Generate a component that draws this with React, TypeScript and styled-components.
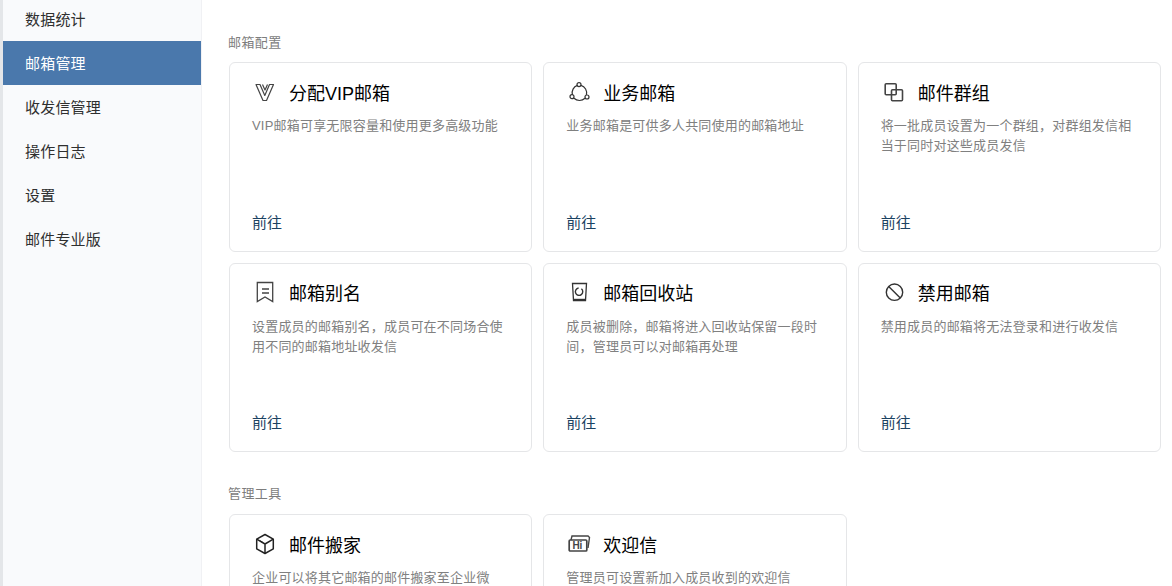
import React from 'react';
import styled, { createGlobalStyle } from 'styled-components';

const GlobalStyle = createGlobalStyle`
  html, body {
    margin: 0;
    height: 100%;
    overflow: hidden;
    background: #fff;
    font-family: 'Liberation Sans', 'Noto Sans CJK SC', sans-serif;
  }
  #root { height: 100%; }
`;

const navItems = ['数据统计', '邮箱管理', '收发信管理', '操作日志', '设置', '邮件专业版'];

const VipIcon = () => (
  <svg width="22" height="20" viewBox="0 0 22 20" fill="none" stroke="#444" strokeWidth="1.2" strokeLinejoin="round">
    <path d="M6 2.5H2L9 18.5h3.5L19.5 2.5H15.5L10.8 13.5z" />
    <path d="M8.5 2.5L11 8l2.5-5.5" />
  </svg>
);

const GroupMailIcon = () => (
  <svg width="23" height="22" viewBox="0 0 23 22" fill="none" stroke="#333" strokeWidth="1.2">
    <path d="M9.4 4.4a7.8 7.8 0 0 0-5 9.4" />
    <path d="M13 4.4a7.8 7.8 0 0 1 5.4 9.4" />
    <path d="M6 17.3a8 8 0 0 0 11 0" />
    <circle cx="11" cy="3.6" r="2" />
    <circle cx="4" cy="15.7" r="2" />
    <circle cx="19" cy="16" r="2" />
  </svg>
);

const GroupIcon = () => (
  <svg width="21" height="20" viewBox="0 0 21 20" fill="none" stroke="#444" strokeWidth="1.6">
    <rect x="2.2" y="1.8" width="11" height="11" rx="1" />
    <rect x="8.5" y="7.8" width="11" height="11" rx="1" />
  </svg>
);

const AliasIcon = () => (
  <svg width="20" height="22" viewBox="0 0 20 22" fill="none" stroke="#444" strokeWidth="1.3">
    <path d="M3.3 1.5H18.7V20.5L11 16 3.3 20.5z" />
    <path d="M8 8h7M8 12h7" />
  </svg>
);

const RecycleIcon = () => (
  <svg width="22" height="22" viewBox="0 0 22 22" fill="none" stroke="#333" strokeWidth="1.3">
    <path d="M4.5 2.5H18.5L17.5 19.5H5.5z" />
    <path d="M10.6 7a3.7 3.7 0 1 0 2.8 .8" strokeWidth="1.4" />
    <path d="M5.5 18.8H17.5" strokeWidth="2" />
  </svg>
);

const BanIcon = () => (
  <svg width="22" height="20" viewBox="0 0 22 20" fill="none" stroke="#333" strokeWidth="1.4">
    <circle cx="11.5" cy="10.2" r="8.2" />
    <path d="M5.7 4.4l11.6 11.6" />
  </svg>
);

const BoxIcon = () => (
  <svg width="22" height="22" viewBox="-1 0 22 22" fill="none" stroke="#222" strokeWidth="1.5" strokeLinejoin="round">
    <path d="M10 1.5l8.3 4.7v9.6L10 20.5l-8.3-4.7V6.2z" />
    <path d="M1.7 6.2L10 11l8.3-4.8M10 11v9.5" />
    <path d="M5 7.8l3 1.7" strokeWidth="1" />
  </svg>
);

const WelcomeIcon = () => (
  <svg width="23" height="20" viewBox="0 0 23 20" fill="none" stroke="#444" strokeWidth="1.4">
    <path d="M3 6l1-4h16l1.5 1.5L20 14" />
    <rect x="1.2" y="6" width="17.6" height="11" rx="1" strokeWidth="1.7" />
    <HiLabel x="4.4" y="15">Hi</HiLabel>
  </svg>
);

type CardData = { icon: React.ReactNode; title: string; desc: string };

const configCards: CardData[] = [
  { icon: <VipIcon />, title: '分配VIP邮箱', desc: 'VIP邮箱可享无限容量和使用更多高级功能' },
  { icon: <GroupMailIcon />, title: '业务邮箱', desc: '业务邮箱是可供多人共同使用的邮箱地址' },
  { icon: <GroupIcon />, title: '邮件群组', desc: '将一批成员设置为一个群组，对群组发信相当于同时对这些成员发信' },
  { icon: <AliasIcon />, title: '邮箱别名', desc: '设置成员的邮箱别名，成员可在不同场合使用不同的邮箱地址收发信' },
  { icon: <RecycleIcon />, title: '邮箱回收站', desc: '成员被删除，邮箱将进入回收站保留一段时间，管理员可以对邮箱再处理' },
  { icon: <BanIcon />, title: '禁用邮箱', desc: '禁用成员的邮箱将无法登录和进行收发信' },
];

const toolCards: CardData[] = [
  { icon: <BoxIcon />, title: '邮件搬家', desc: '企业可以将其它邮箱的邮件搬家至企业微信，方便成员查看' },
  { icon: <WelcomeIcon />, title: '欢迎信', desc: '管理员可设置新加入成员收到的欢迎信' },
];

const App: React.FC = () => {
  const renderCard = (card: CardData) => (
    <Card key={card.title}>
      <CardHead>
        <IconSlot>{card.icon}</IconSlot>
        <CardTitle>{card.title}</CardTitle>
      </CardHead>
      <CardDesc>{card.desc}</CardDesc>
      <CardLink>前往</CardLink>
    </Card>
  );

  return (
    <Page>
      <GlobalStyle />
      <Sidebar>
        {navItems.map((item) => (
          <NavItem key={item} $active={item === '邮箱管理'}>
            {item}
          </NavItem>
        ))}
      </Sidebar>
      <Main>
        <SectionTitle>邮箱配置</SectionTitle>
        <CardGrid>{configCards.map(renderCard)}</CardGrid>
        <SectionTitle>管理工具</SectionTitle>
        <CardGrid>{toolCards.map(renderCard)}</CardGrid>
      </Main>
    </Page>
  );
};

const Page = styled.div`
  display: flex;
  height: 586px;
  overflow: hidden;
  box-sizing: border-box;
  border-left: 3px solid #e4e6e9;
`;

const Sidebar = styled.nav`
  width: 199px;
  flex-shrink: 0;
  box-sizing: border-box;
  background: #f9fafc;
  border-right: 1px solid #f0f1f4;
  display: flex;
  flex-direction: column;
  margin-top: -3px;
`;

const NavItem = styled.div<{ $active?: boolean }>`
  box-sizing: border-box;
  height: 44px;
  padding: 1px 0 0 22px;
  line-height: 44px;
  font-size: 15px;
  letter-spacing: 0.2px;
  color: ${(p) => (p.$active ? '#fff' : '#2f2f2f')};
  background: ${(p) => (p.$active ? '#4a78ac' : 'transparent')};
`;

const Main = styled.main`
  flex: 1;
  padding: 34px 11px 0 27px;
  min-width: 0;
`;

const SectionTitle = styled.div`
  height: 18px;
  line-height: 18px;
  font-size: 13px;
  letter-spacing: 0.4px;
  color: #7d7d7d;
  margin-left: -1px;
  margin-bottom: 10px;
  & ~ & {
    margin-top: 33px;
    margin-bottom: 11px;
  }
`;

const CardGrid = styled.div`
  display: grid;
  grid-template-columns: repeat(3, 1fr);
  grid-auto-rows: 189.5px;
  gap: 11px;
`;

const Card = styled.section`
  box-sizing: border-box;
  border: 1px solid #e5e6e8;
  border-radius: 6px;
  background: #fff;
  padding: 14.9px 22px 18px;
  display: flex;
  flex-direction: column;
`;

const CardHead = styled.div`
  display: flex;
  align-items: center;
  height: 28px;
`;

const IconSlot = styled.span`
  width: 37px;
  flex-shrink: 0;
  display: flex;
  align-items: center;
  padding-left: 2px;
  box-sizing: border-box;
`;

const HiLabel = styled.text`
  font-family: 'Liberation Sans', sans-serif;
  font-size: 10px;
  font-weight: 700;
  fill: #444;
  stroke: none;
`;

const CardTitle = styled.h3`
  margin: 0;
  font-size: 18px;
  font-weight: 400;
  color: #000;
`;

const CardDesc = styled.p`
  margin: 10.2px 0 0;
  font-size: 13px;
  letter-spacing: 0.2px;
  line-height: 20px;
  color: #808080;
  flex: 1;
`;

const CardLink = styled.a`
  font-size: 15px;
  line-height: 20px;
  color: #1b4262;
`;

export default App;
